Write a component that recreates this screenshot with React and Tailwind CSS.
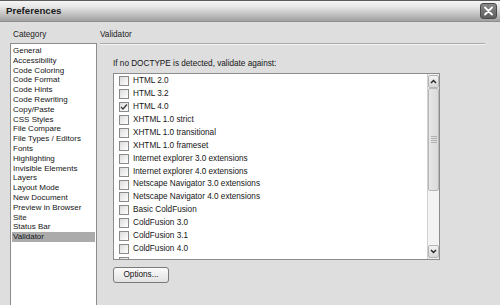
export default function App() {
  const cats = [
    "General",
    "Accessibility",
    "Code Coloring",
    "Code Format",
    "Code Hints",
    "Code Rewriting",
    "Copy/Paste",
    "CSS Styles",
    "File Compare",
    "File Types / Editors",
    "Fonts",
    "Highlighting",
    "Invisible Elements",
    "Layers",
    "Layout Mode",
    "New Document",
    "Preview in Browser",
    "Site",
    "Status Bar",
    "Validator",
  ];
  const items = [
    ["HTML 2.0", false],
    ["HTML 3.2", false],
    ["HTML 4.0", true],
    ["XHTML 1.0 strict", false],
    ["XHTML 1.0 transitional", false],
    ["XHTML 1.0 frameset", false],
    ["Internet explorer 3.0 extensions", false],
    ["Internet explorer 4.0 extensions", false],
    ["Netscape Navigator 3.0 extensions", false],
    ["Netscape Navigator 4.0 extensions", false],
    ["Basic ColdFusion", false],
    ["ColdFusion 3.0", false],
    ["ColdFusion 3.1", false],
    ["ColdFusion 4.0", false],
  ];
  return (
    <div className="w-[500px] h-[305px] overflow-hidden bg-[#dedede] flex flex-col text-[#151515] font-['Liberation_Sans',Arial,sans-serif]">
      {/* Title bar */}
      <div className="h-[22px] shrink-0 flex items-center justify-between pl-[6px] pr-[3px] border-t border-t-[#5c5c5c] border-b border-b-[#8e8e8e] bg-[linear-gradient(#f5f5f5,#e6e6e6_30%,#a0a0a0)]">
        <span className="font-bold text-[9.7px] leading-none text-[#1a1a1a]">Preferences</span>
        <div className="w-[17px] h-[16px] rounded-[3px] bg-[linear-gradient(#8a8a8a,#5e5e5e)] border border-[#4a4a4a] flex items-center justify-center">
          <svg width="11" height="10" viewBox="0 0 11 10">
            <path d="M2 1.5 L9 8.5 M9 1.5 L2 8.5" stroke="#ffffff" strokeWidth="1.8" strokeLinecap="round" />
          </svg>
        </div>
      </div>

      {/* Body */}
      <div className="flex-1 flex pl-[10px] pt-[8px] min-h-0">
        {/* Category column */}
        <div className="w-[87px] flex flex-col">
          <div className="h-[10px] leading-[10px] text-[8.2px] pl-[3px] text-[#222]">Category</div>
          <div className="mt-[3px] flex-1 bg-white border border-[#8c8c8c] border-b-0 px-[1px] pt-[2px]">
            {cats.map((c) => (
              <div
                key={c}
                className={`h-[9.8px] leading-[9.8px] text-[8px] pl-[1px] whitespace-nowrap ${c === "Validator" ? "bg-[#ababab]" : ""}`}
              >
                {c}
              </div>
            ))}
          </div>
        </div>

        {/* Right panel */}
        <div className="flex-1 ml-[3px] flex flex-col">
          <div className="h-[10px] leading-[10px] text-[8.2px] text-[#222]">Validator</div>
          <div className="mt-[3px] mr-[15px] border-t border-t-[#a8a8a8] border-b border-b-[#f6f6f6]"></div>
          <div className="ml-[13px] mt-[14px] h-[10px] leading-[10px] text-[8.2px] whitespace-nowrap">
            If no DOCTYPE is detected, validate against:
          </div>
          <div className="ml-[13px] mt-[4px] w-[327px] h-[187px] bg-white border border-[#8c8c8c] flex">
            <div className="flex-1 overflow-hidden pt-[1px] pl-[5px]">
              {items.map(([label, checked]) => (
                <div key={label} className="h-[12.9px] flex items-center gap-[4px] whitespace-nowrap">
                  <div className="w-[10px] h-[10px] shrink-0 border border-[#8a8a8a] bg-[linear-gradient(135deg,#dcdcdc,#ffffff)] flex items-center justify-center">
                    {checked && (
                      <svg width="8" height="8" viewBox="0 0 8 8">
                        <path d="M1 4 L3 6 L7 1.5" fill="none" stroke="#3a3a3a" strokeWidth="1.3" />
                      </svg>
                    )}
                  </div>
                  <span className="text-[8.2px] leading-none">{label}</span>
                </div>
              ))}
              <div className="h-[12.9px] flex items-center">
                <div className="w-[10px] h-[10px] shrink-0 border border-[#8a8a8a] bg-[linear-gradient(135deg,#dcdcdc,#ffffff)]"></div>
              </div>
            </div>
            {/* Scrollbar */}
            <div className="w-[12px] shrink-0 flex flex-col py-[1px] bg-[#f3f3f3] border-l border-[#d0d0d0]">
              <div className="h-[13px] shrink-0 bg-[linear-gradient(#f4f4f4,#d6d6d6)] border border-[#b4b4b4] rounded-[2px] flex items-center justify-center">
                <svg width="7" height="5" viewBox="0 0 7 5">
                  <path d="M1 4 L3.5 1.5 L6 4" fill="none" stroke="#222" strokeWidth="1.4" />
                </svg>
              </div>
              <div className="h-[103px] shrink-0 bg-[linear-gradient(90deg,#e6e6e6,#dadada)] border border-[#b8b8b8] rounded-[2px] flex flex-col items-center justify-center gap-[1px]">
                <div className="w-[6px] h-px bg-[#b0b0b0]"></div>
                <div className="w-[6px] h-px bg-[#b0b0b0]"></div>
                <div className="w-[6px] h-px bg-[#b0b0b0]"></div>
                <div className="w-[6px] h-px bg-[#b0b0b0]"></div>
              </div>
              <div className="flex-1"></div>
              <div className="h-[13px] shrink-0 bg-[linear-gradient(#f4f4f4,#d6d6d6)] border border-[#b4b4b4] rounded-[2px] flex items-center justify-center">
                <svg width="7" height="5" viewBox="0 0 7 5">
                  <path d="M1 1 L3.5 3.5 L6 1" fill="none" stroke="#222" strokeWidth="1.4" />
                </svg>
              </div>
            </div>
          </div>
          <div className="ml-[13px] mt-[7px] w-[56px] h-[16px] rounded-[3px] border border-[#7a7a7a] bg-[linear-gradient(#fbfbfb,#e2e2e2)] flex items-center justify-center text-[8.2px] leading-none">
            Options...
          </div>
        </div>
      </div>
    </div>
  );
}
